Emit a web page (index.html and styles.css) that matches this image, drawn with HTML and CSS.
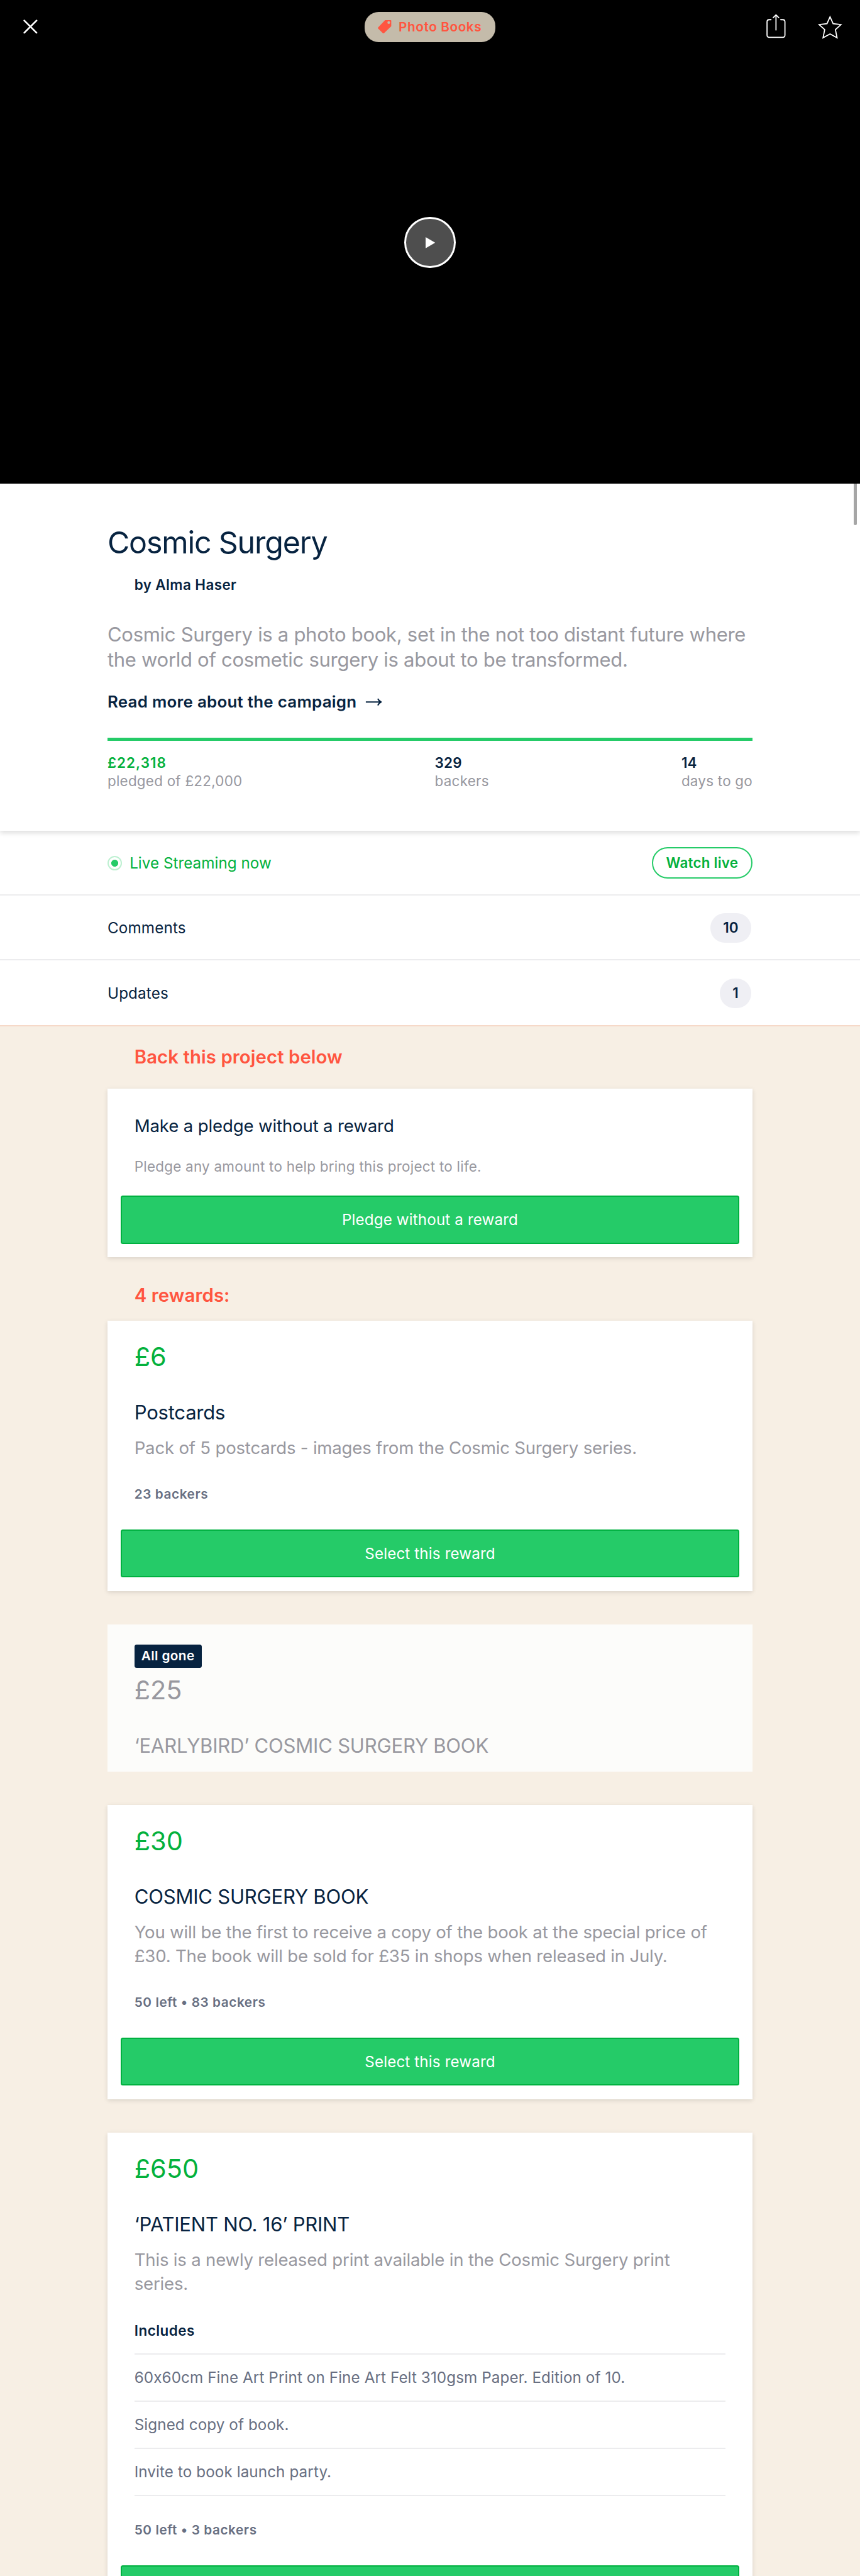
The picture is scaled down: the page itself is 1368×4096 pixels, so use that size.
FILE: index.html
```
<!DOCTYPE html>
<html lang="en">
<head>
<meta charset="utf-8">
<title>Cosmic Surgery</title>
<link rel="stylesheet" href="styles.css">
</head>
<body>
<header class="hero">
  <div class="topbar">
    <svg class="icon" viewBox="0 0 48 48"><path d="M13 13L35 35M35 13L13 35" stroke-width="3"/></svg>
    <span class="category">
      <svg class="tag" viewBox="0 0 24 24"><path fill-rule="evenodd" d="M13 0H23Q24 0 24 1V11L10.8 23.6Q10 24.3 9.2 23.6L.4 14.8Q-.3 14 .4 13.2ZM19.5 2A2.4 2.4 0 1 0 19.5 6.8A2.4 2.4 0 1 0 19.5 2Z"/></svg>
      <span class="category-name">Photo Books</span>
    </span>
    <span class="actions">
      <svg class="icon" viewBox="0 0 48 48"><path d="M15 11.5H12Q8 11.5 8 15.5V39Q8 43 12 43H36Q40 43 40 39V15.5Q40 11.5 36 11.5H32.500M24 30V3M19 8L24 3L29 8"/></svg>
      <svg class="icon" viewBox="0 0 48 48"><path stroke-linecap="butt" stroke-linejoin="miter" d="M24 6.500L29.500 18.700L43.500 20.300L33.600 29.400L36.500 43.800L24 37L11.500 43.800L14.400 29.400L4.500 20.300L18.500 18.700Z"/></svg>
    </span>
  </div>
  <div class="play"><svg class="play-mark" viewBox="0 0 17 20"><path d="M0 0L17 10L0 20Z"/></svg></div>
</header>

<section class="summary">
  <span class="scroll-mark"></span>
  <h1 class="title">Cosmic Surgery</h1>
  <p class="byline">by Alma Haser</p>
  <p class="blurb">Cosmic Surgery is a photo book, set in the not too distant future where<br>the world of cosmetic surgery is about to be transformed.</p>
  <p class="more"><span>Read more about the campaign</span><svg class="arrow" viewBox="0 0 30 14"><path d="M1 7H28M22.500 1Q24.500 5.500 28.500 7Q24.500 8.500 22.500 13"/></svg></p>
  <div class="progress"></div>
  <div class="stats">
    <div><p class="stat pledged">£22,318</p><p class="stat-label">pledged of £22,000</p></div>
    <div><p class="stat">329</p><p class="stat-label">backers</p></div>
    <div><p class="stat">14</p><p class="stat-label">days to go</p></div>
  </div>
</section>

<nav class="links">
  <div class="link live"><span class="live-label"><i class="dot"></i>Live Streaming now</span><span class="watch">Watch live</span></div>
  <div class="link"><span>Comments</span><span class="count">10</span></div>
  <div class="link"><span>Updates</span><span class="count">1</span></div>
</nav>

<main class="rewards">
  <h2 class="heading">Back this project below</h2>
  <article class="card pledge">
    <h3 class="pledge-title">Make a pledge without a reward</h3>
    <p class="pledge-note">Pledge any amount to help bring this project to life.</p>
    <div class="button">Pledge without a reward</div>
  </article>
  <h2 class="heading second">4 rewards:</h2>
  <article class="card">
    <p class="price">£6</p>
    <h3 class="name">Postcards</h3>
    <p class="desc">Pack of 5 postcards - images from the Cosmic Surgery series.</p>
    <p class="backers">23 backers</p>
    <div class="button">Select this reward</div>
  </article>
  <article class="card gone">
    <span class="badge">All gone</span>
    <p class="price">£25</p>
    <h3 class="name">‘EARLYBIRD’ COSMIC SURGERY BOOK</h3>
  </article>
  <article class="card">
    <p class="price">£30</p>
    <h3 class="name">COSMIC SURGERY BOOK</h3>
    <p class="desc">You will be the first to receive a copy of the book at the special price of<br>£30. The book will be sold for £35 in shops when released in July.</p>
    <p class="backers">50 left • 83 backers</p>
    <div class="button">Select this reward</div>
  </article>
  <article class="card">
    <p class="price">£650</p>
    <h3 class="name">‘PATIENT NO. 16’ PRINT</h3>
    <p class="desc">This is a newly released print available in the Cosmic Surgery print<br>series.</p>
    <h4 class="includes">Includes</h4>
    <ul class="items">
      <li>60x60cm Fine Art Print on Fine Art Felt 310gsm Paper. Edition of 10.</li>
      <li>Signed copy of book.</li>
      <li>Invite to book launch party.</li>
    </ul>
    <p class="backers">50 left • 3 backers</p>
    <div class="button"></div>
  </article>
</main>
</body>
</html>
```
FILE: styles.css
```
* { box-sizing: border-box; margin: 0; padding: 0; }
html { font-size: 8.905px; }
body {
  height: 100vh;
  overflow: hidden;
  background: #f7efe4;
  color: #072340;
  font-family: Inter, "Liberation Sans", sans-serif;
  white-space: nowrap;
}
svg { display: block; }

.hero { height: 86.4rem; background: #000; }
.topbar {
  display: grid;
  grid-template-columns: 1fr auto 1fr;
  align-items: center;
  height: 9.6rem;
  padding: 0 3rem;
}
.icon {
  width: 4.8rem;
  height: 4.8rem;
  fill: none;
  stroke: #fff;
  stroke-width: 2;
  stroke-linecap: round;
  stroke-linejoin: round;
}
.actions { display: flex; justify-content: flex-end; gap: 4.8rem; }
.category {
  display: flex;
  align-items: center;
  width: 23.4rem;
  height: 5.4rem;
  padding-left: 2.4rem;
  border-radius: 2.5rem;
  background: #c4bbaa;
  color: #ff5540;
}
.tag { width: 2.4rem; height: 2.4rem; fill: #ff5540; }
.category-name { margin-left: 1.3rem; font-size: 2.33rem; font-weight: 600; letter-spacing: .0276em; }
.play {
  display: flex;
  align-items: center;
  width: 9.1rem;
  height: 9.1rem;
  margin: 29.1rem auto 0;
  padding-left: 3.4rem;
  border: .4rem solid #fff;
  border-radius: 50%;
  background: #4e4e4e;
}
.play-mark { width: 1.7rem; height: 2rem; margin-top: .2rem; fill: #fff; }

.summary {
  position: relative;
  height: 61.9rem;
  padding: 7.22rem 19.2rem 0;
  background: #fff;
  box-shadow: 0 .4rem .8rem rgba(0, 0, 0, .12);
}
.scroll-mark {
  position: absolute;
  top: 0;
  right: .6rem;
  width: .5rem;
  height: 7.4rem;
  border-radius: 0 0 .3rem .3rem;
  background: #a6a6a6;
}
.title { font-size: 5.43rem; font-weight: 400; line-height: 6.6rem; letter-spacing: -.0245em; }
.byline { margin: 2.76rem 0 0 4.8rem; font-size: 2.52rem; font-weight: 600; line-height: 3rem; letter-spacing: .0177em; }
.blurb { margin-top: 5.03rem; color: #98989f; font-size: 3.49rem; line-height: 4.6rem; letter-spacing: -.0102em; }
.more {
  display: flex;
  align-items: center;
  gap: 1.5rem;
  margin-top: 3.33rem;
  font-size: 2.91rem;
  font-weight: 600;
  line-height: 3.6rem;
  letter-spacing: .0098em;
}
.arrow { width: 3rem; height: 1.4rem; fill: none; stroke: #072340; stroke-width: 2.4; }
.progress { height: .6rem; margin-top: 4.56rem; background: #25cb68; }
.stats { display: flex; justify-content: space-between; margin-top: 2.38rem; font-size: 2.52rem; line-height: 3.2rem; }
.stat { font-weight: 600; letter-spacing: .01em; }
.pledged { color: #03b13c; letter-spacing: .045em; }
.stat-label { color: #98989f; letter-spacing: .01em; }

.links { background: #fff; }
.link {
  display: flex;
  align-items: center;
  justify-content: space-between;
  height: 11.6rem;
  padding: .2rem 19.2rem 0;
  border-bottom: 2px solid #ececee;
  font-size: 2.72rem;
  letter-spacing: .006em;
}
.link:last-child { height: 11.8rem; border-color: #f6d9c8; }
.live { color: #03b13c; letter-spacing: .0015em; }
.live-label { display: flex; align-items: center; }
.dot {
  width: 2.6rem;
  height: 2.6rem;
  margin-right: 1.35rem;
  border: .25rem solid #bdf0d1;
  border-radius: 50%;
  background: radial-gradient(circle, #25cb68 .58rem, transparent .66rem);
}
.watch {
  width: 18rem;
  height: 5.6rem;
  border: 2px solid #25cb68;
  border-radius: 2.8rem;
  font-size: 2.52rem;
  font-weight: 600;
  line-height: 5.2rem;
  letter-spacing: .0102em;
  text-align: center;
}
.count {
  height: 5.2rem;
  margin-right: .2rem;
  padding: 0 2.3rem;
  border-radius: 2.6rem;
  background: #efeff4;
  font-size: 2.52rem;
  font-weight: 600;
  line-height: 5.2rem;
}

.rewards { padding: 3.4rem 19.2rem 0; }
.heading { padding-left: 4.8rem; color: #ff5540; font-size: 3.3rem; font-weight: 600; line-height: 4rem; letter-spacing: .002em; }
.second { margin: 4.8rem 0 2.5rem; }
.card {
  margin-bottom: 6rem;
  padding: 3.7rem 4.8rem 2.4rem;
  background: #fff;
  box-shadow: 0 .2rem .8rem rgba(0, 0, 0, .12);
}
.pledge { margin: 3.7rem 0 0; padding-top: 4.67rem; }
.pledge-title { font-size: 3.1rem; font-weight: 400; line-height: 4rem; letter-spacing: -.0053em; }
.pledge-note { margin-top: 3.66rem; color: #98989f; font-size: 2.52rem; line-height: 3.2rem; letter-spacing: .0106em; }
.button {
  height: 8.6rem;
  margin: 4.75rem -2.4rem 0;
  border: 2px solid #00b140;
  border-radius: .4rem;
  background: #25cb68;
  color: #fff;
  font-size: 2.72rem;
  line-height: 8.3rem;
  letter-spacing: .005em;
  text-align: center;
}
.pledge .button { margin-top: 3.57rem; }
.price { color: #03b13c; font-size: 4.66rem; line-height: 5.6rem; }
.name { margin-top: 4.83rem; font-size: 3.49rem; font-weight: 400; line-height: 4.4rem; letter-spacing: -.0075em; }
.desc { margin-top: 2.14rem; color: #98989f; font-size: 3.1rem; line-height: 4.2rem; letter-spacing: -.0075em; }
.backers { margin-top: 4.68rem; color: #686f82; font-size: 2.33rem; font-weight: 600; line-height: 3rem; letter-spacing: .028em; }
.gone { padding-top: 3.6rem; background: #fcfcfa; box-shadow: none; }
.gone .price, .gone .name { color: #98989f; }
.badge {
  display: block;
  width: 12rem;
  height: 4.1rem;
  margin-bottom: 1.3rem;
  border-radius: .4rem;
  background: #072340;
  color: #fff;
  font-size: 2.33rem;
  font-weight: 600;
  line-height: 4.1rem;
  letter-spacing: .019em;
  text-align: center;
}
.includes { margin-top: 4.78rem; font-size: 2.52rem; font-weight: 600; line-height: 3rem; letter-spacing: .0223em; }
.items { margin: 2.55rem 0 -.1rem; border-bottom: 2px solid #ececee; list-style: none; }
.items li {
  height: 8.43rem;
  border-top: 2px solid #ececee;
  color: #686f82;
  font-size: 2.72rem;
  line-height: 8.2rem;
  letter-spacing: .004em;
}
```
